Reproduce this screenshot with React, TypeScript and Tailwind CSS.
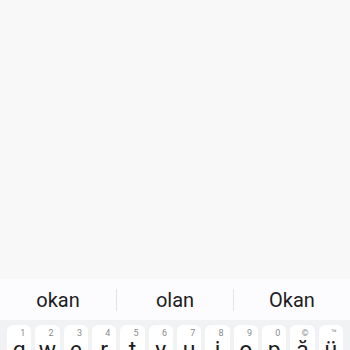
import React from 'react';

const keys = [
  { k: 'q', n: '1' },
  { k: 'w', n: '2' },
  { k: 'e', n: '3' },
  { k: 'r', n: '4' },
  { k: 't', n: '5' },
  { k: 'y', n: '6' },
  { k: 'u', n: '7' },
  { k: 'i', n: '8' },
  { k: 'o', n: '9' },
  { k: 'p', n: '0' },
  { k: 'ă', n: '©' },
  { k: 'ü', n: '™' },
];

const suggestions = ['okan', 'olan', 'Okan'];

export default function App() {
  return (
    <div className="w-[350px] h-[350px] overflow-hidden flex flex-col bg-[#f8f8f8] font-['Roboto',sans-serif]">
      {/* Empty content area */}
      <div className="h-[279px] shrink-0 bg-[#f8f8f8]" />

      {/* Suggestion strip */}
      <div className="h-[41px] shrink-0 flex items-center bg-[#fcfcfe]">
        {suggestions.map((s, i) => (
          <React.Fragment key={s}>
            {i > 0 && <div className="w-px h-[22px] bg-[#e4e4e8]" />}
            <div className="flex-1 text-center text-[20px] text-[#1d1d1f] leading-none">{s}</div>
          </React.Fragment>
        ))}
      </div>

      {/* Keyboard */}
      <div className="flex-1 bg-[#f1f2f4] pt-[5px] px-[5px]">
        <div className="flex">
          {keys.map(({ k, n }) => (
            <div key={k} className="flex-1 px-[2px]">
              <div className="relative h-[42px] rounded-[6px] bg-white shadow-[0_1px_0_rgba(0,0,0,0.06)]">
                <span className="absolute top-[2px] right-[6px] text-[9px] leading-[12px] text-[#8a8a8e]">{n}</span>
                <span className="absolute left-0 right-0 top-[12px] text-center text-[23px] leading-[28px] text-[#1d1d1f]">{k}</span>
              </div>
            </div>
          ))}
        </div>
      </div>
    </div>
  );
}
